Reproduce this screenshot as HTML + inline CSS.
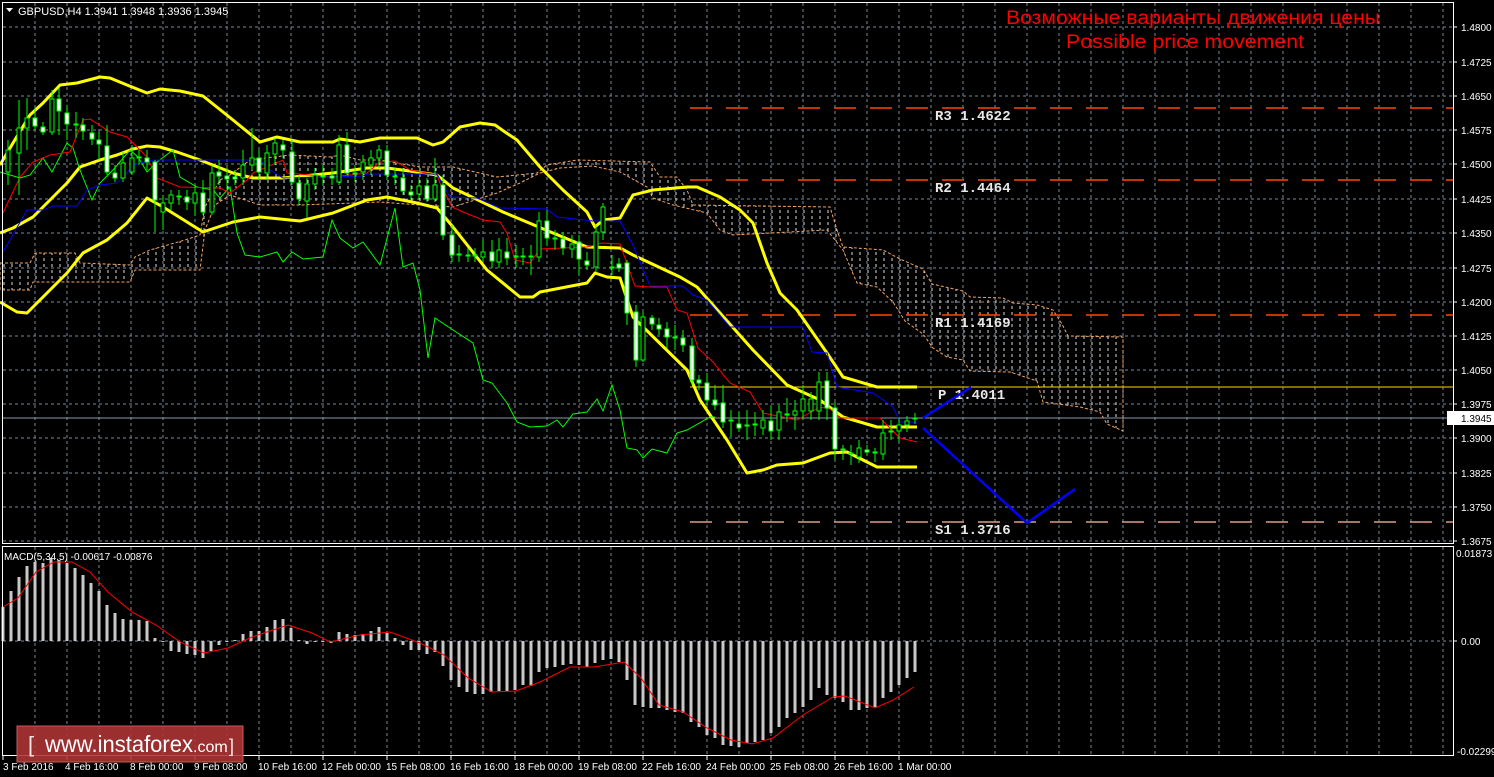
<!DOCTYPE html>
<html><head><meta charset="utf-8"><style>
html,body{margin:0;padding:0;background:#000;}
svg{display:block;font-family:"Liberation Sans",sans-serif;}
.w{fill:#fff;stroke:#00ff00;stroke-width:1}
.k{fill:#000;stroke:#00ff00;stroke-width:1}
.ax{fill:#fff;font-size:10px}
.tl{fill:#fff;font-size:10px}
.pv{fill:#e8e8e8;font-family:"Liberation Mono",monospace;font-size:14px;font-weight:bold}
</style></head><body>
<svg width="1494" height="777" viewBox="0 0 1494 777" xmlns="http://www.w3.org/2000/svg">
<defs>
<pattern id="hatch" width="8" height="6" patternUnits="userSpaceOnUse">
<line x1="4" y1="0" x2="4" y2="3" stroke="#dcdcdc" stroke-width="1"/>
</pattern>
</defs>
<rect width="1494" height="777" fill="#000"/>
<g stroke="#778899" stroke-width="1" stroke-dasharray="3,3" fill="none">
<path d="M35 3V543M67 3V543M99 3V543M131 3V543M163 3V543M195 3V543M227 3V543M259 3V543M291 3V543M323 3V543M355 3V543M387 3V543M419 3V543M451 3V543M483 3V543M515 3V543M547 3V543M579 3V543M611 3V543M643 3V543M675 3V543M707 3V543M739 3V543M771 3V543M803 3V543M835 3V543M867 3V543M899 3V543M931 3V543M963 3V543M995 3V543M1027 3V543M1059 3V543M1091 3V543M1123 3V543M1155 3V543M1187 3V543M1219 3V543M1251 3V543M1283 3V543M1315 3V543M1347 3V543M1379 3V543M1411 3V543M1443 3V543"/>
<path d="M35 547V756M67 547V756M99 547V756M131 547V756M163 547V756M195 547V756M227 547V756M259 547V756M291 547V756M323 547V756M355 547V756M387 547V756M419 547V756M451 547V756M483 547V756M515 547V756M547 547V756M579 547V756M611 547V756M643 547V756M675 547V756M707 547V756M739 547V756M771 547V756M803 547V756M835 547V756M867 547V756M899 547V756M931 547V756M963 547V756M995 547V756M1027 547V756M1059 547V756M1091 547V756M1123 547V756M1155 547V756M1187 547V756M1219 547V756M1251 547V756M1283 547V756M1315 547V756M1347 547V756M1379 547V756M1411 547V756M1443 547V756"/>
<path d="M3 27H1453M3 62H1453M3 96H1453M3 130H1453M3 164H1453M3 199H1453M3 233H1453M3 268H1453M3 302H1453M3 336H1453M3 370H1453M3 404H1453M3 438H1453M3 473H1453M3 507H1453M3 541H1453M3 641H1453"/>
</g>
<g stroke-dasharray="3,2" stroke-width="1">
<polygon fill="url(#hatch)" stroke="#f4a460" points="0,263 30,263 35,253 75,253 80,263 130,265 135,257 150,250 185,240 200,235 205,207 220,180 230,175 250,160 290,155 330,157 340,155 360,160 380,160 420,167 453,167 497,177 537,173 547,165 577,160 650,162 660,177 677,177 687,190 693,205 830,207 837,230 843,247 883,250 900,259 923,269 932,284 963,291 970,297 1003,298 1013,303 1037,305 1053,310 1062,324 1068,336 1123,337 1123,431 1107,424 1100,412 1080,407 1043,402 1037,381 1010,372 970,371 963,360 947,357 933,348 923,334 905,321 893,302 877,287 857,283 843,250 827,230 733,235 720,230 707,213 673,205 653,198 647,187 620,172 593,166 560,168 540,173 520,183 497,193 453,207 420,205 380,202 300,205 260,205 230,195 215,205 205,230 200,270 135,270 130,282 33,282 30,290 0,290"/>
</g>
<g stroke-width="1.5" fill="none">
<path d="M690 108H1453M690 180H1453M690 315H1453" stroke="#ff4500" stroke-dasharray="22,14"/>
<path d="M690 522H1453" stroke="#e09a8a" stroke-dasharray="22,14"/>
<path d="M690 387H1453" stroke="#ffd700" stroke-width="1"/>
<path d="M3 418H1453" stroke="#8899aa" stroke-width="1"/>
</g>
<text class="pv" x="935" y="120">R3 1.4622</text>
<text class="pv" x="935" y="192">R2 1.4464</text>
<text class="pv" x="935" y="327">R1 1.4169</text>
<text class="pv" x="938" y="399">P 1.4011</text>
<text class="pv" x="935" y="534">S1 1.3716</text>
<g fill="none" stroke="#ffff00" stroke-width="3" stroke-linejoin="round">
<polyline points="0,165 13,143 30,115 43,103 60,85 77,83 100,77 110,78 127,85 147,93 160,89 180,91 203,96 233,120 260,142 277,137 300,142 333,142 340,139 360,142 380,138 417,138 433,145 443,142 460,127 480,123 495,125 505,132 517,140 540,167 563,190 587,212 595,227 603,220 620,218 633,195 653,190 687,187 697,187 720,197 740,210 753,223 767,263 780,293 797,310 827,353 843,377 877,387 917,387"/>
<polyline points="0,233 13,228 33,217 50,200 67,183 80,167 100,160 117,155 133,149 147,146 160,147 177,152 200,160 233,173 253,178 283,178 333,173 367,168 387,168 417,172 437,175 453,188 503,212 553,233 587,247 620,248 633,255 680,277 697,287 720,313 753,350 787,385 820,400 843,417 877,427 917,427"/>
<polyline points="0,302 17,312 27,313 43,297 67,273 83,253 107,240 127,223 147,198 163,207 203,232 233,222 260,217 300,221 333,213 367,200 387,197 417,203 437,208 453,227 487,270 520,297 533,297 540,292 587,283 595,273 607,277 620,278 633,317 687,370 700,400 727,440 747,473 763,470 777,465 803,463 830,453 847,452 877,467 917,467"/>
</g>
<g fill="none" stroke-width="1">
<polyline stroke="#00ff00" points="0,172 20,178 30,175 43,158 52,172 67,143 73,148 80,170 92,200 100,183 113,170 130,150 138,157 147,172 157,162 173,150 180,177 197,187 213,190 220,198 230,187 237,233 245,255 260,257 277,252 283,262 292,252 303,259 323,257 332,220 340,238 353,248 363,242 380,265 395,208 403,267 413,263 420,290 428,358 435,318 453,330 473,343 483,380 492,383 507,403 517,422 530,427 547,426 557,420 563,427 573,414 587,412 597,399 603,411 612,385 620,410 627,448 637,450 643,458 652,449 667,453 677,433 687,430 710,417 715,417"/>
<polyline stroke="#ff0000" points="3,213 20,177 33,162 50,155 70,152 83,120 90,119 110,132 127,137 147,157 157,178 180,187 220,188 230,193 247,180 253,173 283,160 287,173 333,177 367,173 380,162 395,161 410,170 437,175 440,183 452,207 463,212 483,220 500,222 507,233 515,260 530,263 540,249 587,247 602,243 620,244 635,286 650,287 667,287 677,310 687,313 698,348 713,362 730,383 750,392 763,413 797,420 820,407 830,409 840,418 880,418 900,438 917,442"/>
<polyline stroke="#0000ff" points="3,252 27,210 43,210 53,206 77,206 87,190 100,185 117,183 127,173 133,165 153,160 260,160 270,170 283,178 363,176 367,174 437,174 450,197 477,198 500,208 547,209 557,217 593,221 620,221 633,245 650,286 683,286 693,295 707,300 730,327 803,327 812,352 827,353 837,387 873,393 893,407 900,422 917,422"/>
</g>
<path stroke="#00ff00" stroke-width="1" fill="none" d="M8 140V185M19 100V195M27 98V150M35 108V130M43 122V135M52 90V135M59 88V135M67 105V140M76 112V138M83 118V140M92 125V145M99 132V160M107 125V175M115 165V182M123 152V182M132 145V175M139 150V165M147 150V170M155 160V232M163 195V230M171 190V210M179 190V205M187 190V210M195 185V215M203 180V215M212 165V215M219 160V185M227 168V190M235 170V185M243 150V185M252 128V170M259 150V180M267 145V180M275 138V165M283 140V158M292 140V185M299 175V205M307 178V218M315 168V190M323 165V185M332 168V185M339 135V185M347 132V175M355 165V182M363 155V180M371 150V175M379 145V168M387 145V180M395 168V185M403 168V195M411 185V200M419 180V200M427 178V202M435 158V202M443 175V240M452 225V262M459 245V262M468 248V262M475 248V262M483 240V262M492 240V268M499 238V268M507 238V265M516 245V268M523 248V265M531 245V275M539 212V262M547 210V246M555 230V250M563 232V255M572 235V258M579 235V275M587 252V270M596 225V272M603 203V240M612 255V275M619 258V272M627 260V325M636 305V367M643 312V362M652 315V330M659 318V335M667 322V348M675 325V350M683 330V352M692 338V385M699 375V390M707 373V405M715 385V410M723 385V428M731 410V437M739 412V432M747 410V440M755 412V436M763 410V435M771 406V440M779 405V440M787 398V422M795 400V430M803 385V420M811 392V420M819 372V420M827 372V420M835 402V460M843 445V460M851 445V465M859 440V463M867 445V455M875 448V462M883 420V460M891 420V440M899 418V442M907 416V432M915 413V424M8 0"/>
<g>
<rect class="k" x="6" y="150" width="4" height="22"/><rect class="k" x="17" y="128" width="4" height="25"/><rect class="k" x="25" y="118" width="4" height="10"/><rect class="w" x="33" y="118" width="4" height="8"/><rect class="w" x="41" y="127" width="4" height="5"/><rect class="k" x="50" y="99" width="4" height="33"/><rect class="w" x="57" y="99" width="4" height="12"/><rect class="w" x="65" y="113" width="4" height="11"/><rect class="w" x="74" y="124" width="4" height="1"/><rect class="w" x="81" y="125" width="4" height="6"/><rect class="w" x="90" y="133" width="4" height="6"/><rect class="w" x="97" y="140" width="4" height="4"/><rect class="w" x="105" y="146" width="4" height="26"/><rect class="w" x="113" y="173" width="4" height="5"/><rect class="k" x="121" y="163" width="4" height="15"/><rect class="k" x="130" y="158" width="4" height="14"/><rect class="w" x="137" y="157" width="4" height="1"/><rect class="w" x="145" y="158" width="4" height="4"/><rect class="w" x="153" y="162" width="4" height="38"/><rect class="k" x="161" y="203" width="4" height="9"/><rect class="k" x="169" y="195" width="4" height="8"/><rect class="w" x="177" y="196" width="4" height="1"/><rect class="w" x="185" y="197" width="4" height="5"/><rect class="k" x="193" y="193" width="4" height="10"/><rect class="w" x="201" y="193" width="4" height="19"/><rect class="k" x="210" y="173" width="4" height="39"/><rect class="w" x="217" y="172" width="4" height="4"/><rect class="w" x="225" y="176" width="4" height="3"/><rect class="w" x="233" y="177" width="4" height="2"/><rect class="k" x="241" y="165" width="4" height="13"/><rect class="k" x="250" y="158" width="4" height="7"/><rect class="w" x="257" y="158" width="4" height="14"/><rect class="k" x="265" y="153" width="4" height="20"/><rect class="k" x="273" y="143" width="4" height="11"/><rect class="w" x="281" y="145" width="4" height="5"/><rect class="w" x="290" y="152" width="4" height="30"/><rect class="w" x="297" y="183" width="4" height="16"/><rect class="k" x="305" y="184" width="4" height="17"/><rect class="k" x="313" y="175" width="4" height="9"/><rect class="w" x="321" y="176" width="4" height="1"/><rect class="w" x="330" y="176" width="4" height="2"/><rect class="k" x="337" y="145" width="4" height="37"/><rect class="w" x="345" y="145" width="4" height="28"/><rect class="w" x="353" y="173" width="4" height="1"/><rect class="k" x="361" y="162" width="4" height="10"/><rect class="k" x="369" y="158" width="4" height="7"/><rect class="k" x="377" y="150" width="4" height="8"/><rect class="w" x="385" y="151" width="4" height="24"/><rect class="w" x="393" y="176" width="4" height="1"/><rect class="w" x="401" y="178" width="4" height="13"/><rect class="w" x="409" y="192" width="4" height="3"/><rect class="k" x="417" y="186" width="4" height="8"/><rect class="w" x="425" y="186" width="4" height="13"/><rect class="k" x="433" y="185" width="4" height="14"/><rect class="w" x="441" y="185" width="4" height="50"/><rect class="w" x="450" y="235" width="4" height="20"/><rect class="w" x="457" y="254" width="4" height="1"/><rect class="w" x="466" y="255" width="4" height="1"/><rect class="w" x="473" y="255" width="4" height="1"/><rect class="k" x="481" y="252" width="4" height="5"/><rect class="w" x="490" y="252" width="4" height="9"/><rect class="k" x="497" y="250" width="4" height="12"/><rect class="w" x="505" y="252" width="4" height="6"/><rect class="w" x="514" y="256" width="4" height="1"/><rect class="w" x="521" y="256" width="4" height="1"/><rect class="w" x="529" y="256" width="4" height="1"/><rect class="k" x="537" y="221" width="4" height="36"/><rect class="w" x="545" y="221" width="4" height="17"/><rect class="w" x="553" y="238" width="4" height="1"/><rect class="w" x="561" y="239" width="4" height="9"/><rect class="k" x="570" y="244" width="4" height="5"/><rect class="w" x="577" y="242" width="4" height="17"/><rect class="w" x="585" y="261" width="4" height="4"/><rect class="k" x="594" y="232" width="4" height="35"/><rect class="k" x="601" y="207" width="4" height="25"/><rect class="w" x="610" y="267" width="4" height="1"/><rect class="w" x="617" y="264" width="4" height="4"/><rect class="w" x="625" y="263" width="4" height="50"/><rect class="w" x="634" y="312" width="4" height="48"/><rect class="k" x="641" y="317" width="4" height="43"/><rect class="w" x="650" y="318" width="4" height="6"/><rect class="w" x="657" y="325" width="4" height="4"/><rect class="w" x="665" y="329" width="4" height="8"/><rect class="w" x="673" y="337" width="4" height="1"/><rect class="w" x="681" y="338" width="4" height="7"/><rect class="w" x="690" y="346" width="4" height="34"/><rect class="w" x="697" y="380" width="4" height="3"/><rect class="w" x="705" y="383" width="4" height="17"/><rect class="w" x="713" y="400" width="4" height="5"/><rect class="w" x="721" y="403" width="4" height="19"/><rect class="w" x="729" y="420" width="4" height="1"/><rect class="w" x="737" y="424" width="4" height="4"/><rect class="w" x="745" y="425" width="4" height="1"/><rect class="w" x="753" y="424" width="4" height="1"/><rect class="k" x="761" y="420" width="4" height="8"/><rect class="w" x="769" y="421" width="4" height="10"/><rect class="k" x="777" y="412" width="4" height="18"/><rect class="w" x="785" y="414" width="4" height="1"/><rect class="k" x="793" y="411" width="4" height="4"/><rect class="k" x="801" y="399" width="4" height="12"/><rect class="k" x="809" y="399" width="4" height="12"/><rect class="k" x="817" y="382" width="4" height="29"/><rect class="w" x="825" y="381" width="4" height="27"/><rect class="w" x="833" y="408" width="4" height="41"/><rect class="w" x="841" y="449" width="4" height="1"/><rect class="w" x="849" y="453" width="4" height="1"/><rect class="k" x="857" y="448" width="4" height="9"/><rect class="w" x="865" y="450" width="4" height="2"/><rect class="w" x="873" y="452" width="4" height="1"/><rect class="k" x="881" y="433" width="4" height="21"/><rect class="w" x="889" y="431" width="4" height="1"/><rect class="k" x="897" y="425" width="4" height="6"/><rect class="k" x="905" y="421" width="4" height="4"/><rect class="w" x="913" y="418" width="4" height="1"/>
</g>
<g stroke="#0000ff" stroke-width="2.5" fill="none">
<polyline points="923,418 971,387"/>
<polyline points="923,428 1027,523 1075,489"/>
</g>
<text x="1006" y="24" fill="#ff0000" font-size="19" textLength="374" lengthAdjust="spacingAndGlyphs">Возможные варианты движения цены</text>
<text x="1066" y="48" fill="#ff0000" font-size="19" textLength="238" lengthAdjust="spacingAndGlyphs">Possible price movement</text>
<polygon points="6,8 13,8 9.5,12" fill="#fff"/>
<text x="18" y="15" fill="#fff" font-size="11">GBPUSD,H4  1.3941 1.3948 1.3936 1.3945</text>
<path stroke="#c8c8c8" stroke-width="3" fill="none" d="M3 641V607M11 641V591M19 641V577M27 641V566M35 641V562M43 641V563M51 641V558M59 641V560M67 641V563M75 641V568M83 641V575M91 641V583M99 641V591M107 641V605M115 641V613M123 641V619M131 641V620M139 641V620M147 641V621M155 641V638M163 641V642M171 641V651M179 641V652M187 641V654M195 641V655M203 641V658M211 641V651M219 641V645M227 641V642M235 641V640M243 641V634M251 641V631M259 641V631M267 641V627M275 641V620M283 641V619M291 641V628M299 641V640M307 641V644M315 641V642M323 641V642M331 641V643M339 641V632M347 641V634M355 641V635M363 641V634M371 641V631M379 641V627M387 641V633M395 641V638M403 641V645M411 641V650M419 641V650M427 641V654M435 641V652M443 641V666M451 641V680M459 641V687M467 641V692M475 641V694M483 641V694M491 641V692M499 641V691M507 641V691M515 641V690M523 641V685M531 641V686M539 641V672M547 641V668M555 641V667M563 641V665M571 641V664M579 641V665M587 641V667M595 641V663M603 641V660M611 641V659M619 641V662M627 641V680M635 641V705M643 641V707M651 641V708M659 641V708M667 641V710M675 641V712M683 641V713M691 641V722M699 641V727M707 641V735M715 641V738M723 641V745M731 641V746M739 641V747M747 641V743M755 641V742M763 641V740M771 641V733M779 641V727M787 641V718M795 641V713M803 641V707M811 641V700M819 641V688M827 641V695M835 641V698M843 641V702M851 641V710M859 641V710M867 641V708M875 641V707M883 641V698M891 641V692M899 641V685M907 641V678M915 641V672"/>
<polyline fill="none" stroke="#ff0000" stroke-width="1" points="3,607 18,598 36,572 54,562 72,562 90,572 108,592 132,612 156,625 180,642 204,653 228,648 252,637 288,625 312,633 330,642 360,635 390,632 420,643 444,655 468,678 492,692 516,691 540,682 570,667 594,667 624,662 641,678 659,705 683,712 707,728 731,740 752,744 773,738 803,715 833,697 845,696 875,708 893,700 914,687"/>
<text x="4" y="560" fill="#fff" font-size="10">MACD(5,34,5) -0.00617 -0.00876</text>
<g stroke="#fff" stroke-width="1" fill="none">
<rect x="2.5" y="2.5" width="1451" height="541"/>
<rect x="2.5" y="546.5" width="1451" height="209"/>
</g>
<g stroke="#fff" stroke-width="1">
<path d="M1453 27h4M1453 62h4M1453 96h4M1453 130h4M1453 164h4M1453 199h4M1453 233h4M1453 268h4M1453 302h4M1453 336h4M1453 370h4M1453 404h4M1453 438h4M1453 473h4M1453 507h4M1453 541h4M1453 641h4"/>
</g>
<g class="ax">
<text class="ax" x="1461" y="31">1.4800</text><text class="ax" x="1461" y="66">1.4725</text><text class="ax" x="1461" y="100">1.4650</text><text class="ax" x="1461" y="134">1.4575</text><text class="ax" x="1461" y="168">1.4500</text><text class="ax" x="1461" y="203">1.4425</text><text class="ax" x="1461" y="237">1.4350</text><text class="ax" x="1461" y="272">1.4275</text><text class="ax" x="1461" y="306">1.4200</text><text class="ax" x="1461" y="340">1.4125</text><text class="ax" x="1461" y="374">1.4050</text><text class="ax" x="1461" y="408">1.3975</text><text class="ax" x="1461" y="442">1.3900</text><text class="ax" x="1461" y="477">1.3825</text><text class="ax" x="1461" y="511">1.3750</text><text class="ax" x="1461" y="545">1.3675</text>
<text class="ax" x="1456" y="557">0.01873</text><text class="ax" x="1461" y="645">0.00</text><text class="ax" x="1457" y="755">-0.02299</text>
</g>
<rect x="1447" y="411" width="47" height="14" fill="#fff"/>
<text x="1461" y="422" fill="#000" font-size="10">1.3945</text>
<path stroke="#fff" stroke-width="1" d="M3 756v4M67 756v4M131 756v4M195 756v4M259 756v4M323 756v4M387 756v4M451 756v4M515 756v4M579 756v4M643 756v4M707 756v4M771 756v4M835 756v4M899 756v4"/>
<g class="tl">
<text class="tl" x="3" y="770">3 Feb 2016</text><text class="tl" x="65" y="770">4 Feb 16:00</text><text class="tl" x="130" y="770">8 Feb 00:00</text><text class="tl" x="194" y="770">9 Feb 08:00</text><text class="tl" x="258" y="770">10 Feb 16:00</text><text class="tl" x="322" y="770">12 Feb 00:00</text><text class="tl" x="386" y="770">15 Feb 08:00</text><text class="tl" x="450" y="770">16 Feb 16:00</text><text class="tl" x="514" y="770">18 Feb 00:00</text><text class="tl" x="578" y="770">19 Feb 08:00</text><text class="tl" x="642" y="770">22 Feb 16:00</text><text class="tl" x="706" y="770">24 Feb 00:00</text><text class="tl" x="770" y="770">25 Feb 08:00</text><text class="tl" x="834" y="770">26 Feb 16:00</text><text class="tl" x="898" y="770">1 Mar 00:00</text>
</g>
<rect x="17" y="726" width="226" height="36" fill="#b03434" fill-opacity="0.88" stroke="#c85a5a" stroke-width="1"/>
<text x="28" y="752" fill="#f4e8e8" font-size="22">[</text>
<text x="45" y="752" fill="#fff" font-size="23" textLength="148" lengthAdjust="spacingAndGlyphs">www.instaforex</text>
<text x="193" y="752" fill="#fff" font-size="16">.com</text>
<text x="229" y="752" fill="#f4e8e8" font-size="18">]</text>
</svg>
</body></html>
